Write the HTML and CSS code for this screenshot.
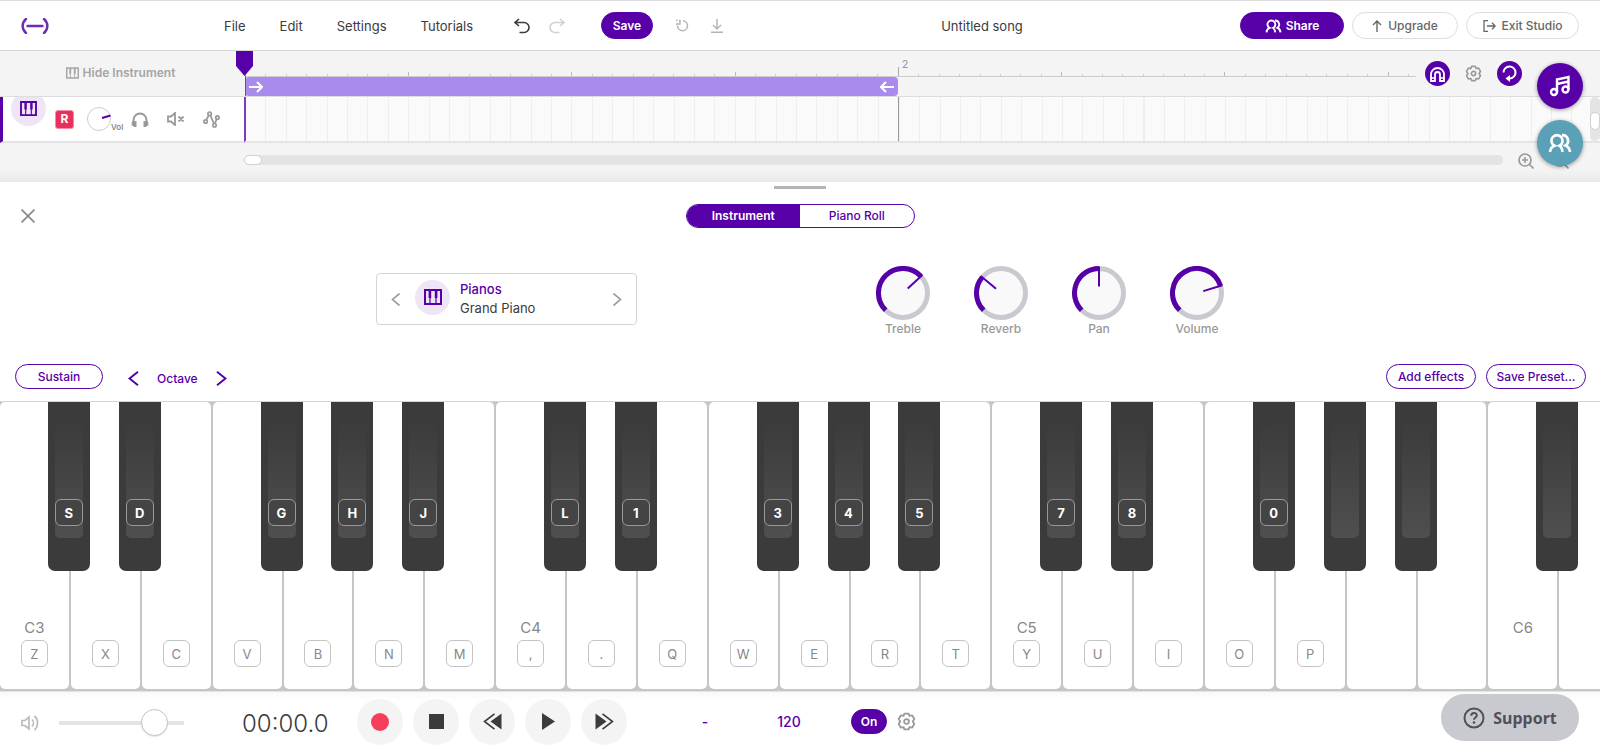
FILE: index.html
```html
<!DOCTYPE html>
<html lang="en">
<head>
    <meta charset="UTF-8">
    <meta name="viewport" content="width=device-width, initial-scale=1.0">
    <title>Untitled song</title>
    <link rel="stylesheet" href="styles.css">
</head>
<body>
    <svg class="sprite" aria-hidden="true">
        <symbol id="piano" viewBox="0 0 18 16">
            <path d="M1 1h16v14H1z" fill="none" stroke="currentColor" stroke-width="2"/>
            <path d="M4.6 1h2.6v8H4.6zM10.8 1h2.6v8h-2.6z" fill="currentColor"/>
            <path d="M6 8v7M12 8v7" stroke="currentColor" stroke-width="1.2"/>
        </symbol>
        <symbol id="people" viewBox="0 0 24 20">
            <path d="M2 19c.3-3.200 1.800-5.200 4.500-6.200a5.600 5.600 0 1 1 5 0c1.800 1 2.700 3 3 6.200M14 2.200a5.600 5.600 0 0 1 3.500 10.300c2.600 1 4.100 3.200 4.500 6.500" fill="none" stroke="currentColor" stroke-width="2.700"/>
        </symbol>
        <symbol id="gear" viewBox="0 0 18 18">
            <path d="M7 1.500h4l.8 2.200 2.600-.4 2 3.400L14.900 9l1.500 2.300-2 3.400-2.600-.4-.8 2.200H7l-.8-2.200-2.600.4-2-3.400L3.100 9 1.600 6.700l2-3.400 2.600.4z" fill="none" stroke="currentColor" stroke-width="1.700" stroke-linejoin="round"/>
            <circle cx="9" cy="9" r="2.300" fill="none" stroke="currentColor" stroke-width="1.700"/>
        </symbol>
    </svg>

    <header class="topbar">
        <a class="logo" href="#" aria-label="Home">
            <svg width="28" height="16" viewBox="0 0 28 16"><path d="M5 1C.5 5 .5 11 5 15M23 1c4.500 4 4.500 10 0 14M6.500 8h15" fill="none" stroke="currentColor" stroke-width="2.400" stroke-linecap="round"/></svg>
        </a>
        <nav class="menu">
            <button>File</button>
            <button>Edit</button>
            <button>Settings</button>
            <button>Tutorials</button>
        </nav>
        <div class="history">
            <button class="icon-btn dark" aria-label="Undo"><svg width="16" height="16" viewBox="0 0 16 16"><path d="M5 1 1 4.500 5 8M1 4.500h9a5 5 0 0 1 0 10H5.500" fill="none" stroke="currentColor" stroke-width="1.600"/></svg></button>
            <button class="icon-btn faint" aria-label="Redo"><svg width="16" height="16" viewBox="0 0 16 16"><path d="m11 1 4 3.500L11 8M15 4.500H6a5 5 0 0 0 0 10h4.500" fill="none" stroke="currentColor" stroke-width="1.600"/></svg></button>
        </div>
        <button class="pill solid save">Save</button>
        <div class="file-tools">
            <button class="icon-btn" aria-label="Revert"><svg width="14" height="14" viewBox="0 0 14 14"><path d="M1 1.500h1.500M4 1.500h1.500M1 5h4V1.500M2.500 6.500a5 5 0 1 0 5.500-4.800" fill="none" stroke="currentColor" stroke-width="1.500"/></svg></button>
            <button class="icon-btn" aria-label="Download"><svg width="14" height="14" viewBox="0 0 14 14"><path d="M7 0v10M3 6l4 4 4-4M1 13.200h12" fill="none" stroke="currentColor" stroke-width="1.500"/></svg></button>
        </div>
        <h1 class="song-title">Untitled song</h1>
        <div class="actions">
            <button class="pill solid share"><svg width="17" height="14"><use href="#people"/></svg>Share</button>
            <button class="pill upgrade"><svg width="10" height="12" viewBox="0 0 10 12"><path d="M5 12V1M1 5l4-4 4 4" fill="none" stroke="currentColor" stroke-width="1.400"/></svg>Upgrade</button>
            <button class="pill exit"><svg width="13" height="12" viewBox="0 0 13 12"><path d="M5 .7H1v10.600h4M4 6h8M9 2.800 12.200 6 9 9.200" fill="none" stroke="currentColor" stroke-width="1.300"/></svg>Exit Studio</button>
        </div>
    </header>

    <section class="arranger">
        <button class="hide-instrument"><svg width="13" height="12"><use href="#piano"/></svg>Hide Instrument</button>
        <div class="ruler">
            <div class="ticks">
                <div class="tick-bar"></div>
                <div class="tick-bar"><span>2</span></div>
            </div>
            <div class="loop-region">
                <svg width="14" height="12" viewBox="0 0 14 12"><path d="M0 6h12.500M8 1l5 5-5 5" fill="none" stroke="currentColor" stroke-width="2"/></svg>
                <svg width="14" height="12" viewBox="0 0 14 12"><path d="M14 6H1.500M6 1 1 6l5 5" fill="none" stroke="currentColor" stroke-width="2"/></svg>
            </div>
            <div class="ruler-tools">
                <button class="round" aria-label="Snap"><svg width="17" height="16" viewBox="0 0 17 16"><path d="M2 15V8.500a6.500 6.500 0 0 1 13 0V15h-4V8.500a2.500 2.500 0 0 0-5 0V15z" fill="none" stroke="currentColor" stroke-width="1.800"/><path d="M2 12h4M11 12h4" stroke="currentColor" stroke-width="1.600"/></svg></button>
                <button class="icon-btn mid" aria-label="Snap settings"><svg width="17" height="17"><use href="#gear"/></svg></button>
                <button class="round" aria-label="Loop"><svg width="17" height="17" viewBox="0 0 17 17"><path d="M2.500 7.500A6 6 0 1 1 9 13.500H6" fill="none" stroke="currentColor" stroke-width="2"/><path d="M9 10 4.500 13.500 9 17z" fill="currentColor"/></svg></button>
            </div>
        </div>

        <div class="track-head">
            <span class="avatar"><svg width="17" height="15"><use href="#piano"/></svg></span>
            <button class="arm">R</button>
            <div class="mini-knob">
                <svg width="24" height="24" viewBox="0 0 24 24"><circle cx="12" cy="12" r="11.500" fill="#fff" stroke="#ccc"/><path d="m15 11 8.500-2.500" stroke="#5700a8" stroke-width="2"/></svg>
                <span>Vol</span>
            </div>
            <button class="icon-btn mid" aria-label="Solo"><svg width="18" height="15" viewBox="0 0 18 15"><path d="M2.500 12V8a6.500 6.500 0 0 1 13 0v4" fill="none" stroke="currentColor" stroke-width="2"/><path d="M1 9.500 5.500 9v6H3.500L.5 13zM17 9.500 12.500 9v6h2l3-2z" fill="currentColor"/></svg></button>
            <button class="icon-btn mid" aria-label="Mute"><svg width="18" height="14" viewBox="0 0 18 14"><path d="M1 4.500h3L8 1v12L4 9.500H1zM11.500 4.500l5 5M16.500 4.500l-5 5" fill="none" stroke="currentColor" stroke-width="1.800"/></svg></button>
            <button class="icon-btn mid" aria-label="Automation"><svg width="17" height="17" viewBox="0 0 17 17"><g fill="none" stroke="currentColor" stroke-width="1.700"><circle cx="2.600" cy="10.500" r="1.700"/><circle cx="6.600" cy="2.700" r="1.700"/><circle cx="11.500" cy="14.200" r="1.700"/><circle cx="14.400" cy="6.500" r="1.700"/><path d="m3.300 9 2.500-4.800M7.300 4.200l3.600 8.500M12 12.500l1.700-4.400"/></g></svg></button>
        </div>
        <div class="lane">
            <div class="grid-bar"></div>
            <div class="grid-bar marked"></div>
            <div class="grid-bar"></div>
            <div class="v-scroll"><span></span></div>
        </div>

        <div class="scroll-row">
            <div class="h-scroll"><span></span></div>
            <div class="zoom-tools">
                <button class="icon-btn mid" aria-label="Zoom in"><svg width="16" height="16" viewBox="0 0 16 16"><path d="M11.500 11.500 15.500 15.500M4 7h6M7 4v6" stroke="currentColor" stroke-width="1.600"/><circle cx="7" cy="7" r="6" fill="none" stroke="currentColor" stroke-width="1.700"/></svg></button>
                <button class="icon-btn mid" aria-label="Zoom out"><svg width="16" height="16" viewBox="0 0 16 16"><path d="M11.500 11.500 15.500 15.500M4 7h6" stroke="currentColor" stroke-width="1.600"/><circle cx="7" cy="7" r="6" fill="none" stroke="currentColor" stroke-width="1.700"/></svg></button>
            </div>
        </div>
        <div class="playhead"></div>
        <div class="fabs">
            <button aria-label="Loops"><svg width="22" height="22" viewBox="0 0 22 22"><g fill="none" stroke="currentColor" stroke-width="2.400"><circle cx="5" cy="17" r="3"/><circle cx="16.500" cy="14.500" r="3"/><path d="M8 17V4.500l11.500-2.500v12.500M8 9l11.500-2.500"/></g></svg></button>
            <button class="teal" aria-label="Collaborators"><svg width="24" height="20"><use href="#people"/></svg></button>
        </div>
    </section>

    <main class="instrument">
        <div class="handle"></div>
        <div class="tab-row">
            <button class="icon-btn close" aria-label="Close"><svg width="14" height="14" viewBox="0 0 14 14"><path d="m.5.5 13 13M13.500.5l-13 13" stroke="currentColor" stroke-width="1.600"/></svg></button>
            <div class="tabs">
                <button class="active">Instrument</button>
                <button>Piano Roll</button>
            </div>
        </div>
        <div class="settings">
            <div class="picker">
                <button class="icon-btn mid" aria-label="Previous"><svg width="9" height="13" viewBox="0 0 9 13"><path d="M8.500.5 1.500 6.500l7 6" fill="none" stroke="currentColor" stroke-width="1.600"/></svg></button>
                <span class="avatar"><svg width="18" height="16"><use href="#piano"/></svg></span>
                <div class="picker-name">
                    <strong>Pianos</strong>
                    <span>Grand Piano</span>
                </div>
                <button class="icon-btn mid" aria-label="Next"><svg width="9" height="13" viewBox="0 0 9 13"><path d="m.5.5 7 6-7 6" fill="none" stroke="currentColor" stroke-width="1.600"/></svg></button>
            </div>
            <div class="knobs" id="knobs"></div>
        </div>
        <div class="toolbar">
            <button class="pill outline sustain">Sustain</button>
            <div class="octave">
                <button class="icon-btn" aria-label="Octave down"><svg width="11" height="15" viewBox="0 0 11 15"><path d="M10 .8 1.500 7.500l8.500 6.700" fill="none" stroke="currentColor" stroke-width="2"/></svg></button>
                <span>Octave</span>
                <button class="icon-btn" aria-label="Octave up"><svg width="11" height="15" viewBox="0 0 11 15"><path d="m1 .8 8.500 6.700L1 14.200" fill="none" stroke="currentColor" stroke-width="2"/></svg></button>
            </div>
            <button class="pill outline effects">Add effects</button>
            <button class="pill outline preset">Save Preset...</button>
        </div>
        <div class="keyboard" id="keyboard"></div>
    </main>

    <footer class="transport">
        <label class="volume" for="master">
            <svg width="18" height="16" viewBox="0 0 18 16"><path d="M1 5.500h3L8 2v12l-4-3.500H1zM11 4.500a5 5 0 0 1 0 7M13.500 1c4 3.500 4 10.500 0 14" fill="none" stroke="currentColor" stroke-width="1.700"/></svg>
        </label>
        <input id="master" type="range" min="0" max="100" value="84" aria-label="Master volume">
        <output class="time">00:00.0</output>
        <div class="transport-buttons">
            <button aria-label="Record"><svg width="18" height="18" viewBox="0 0 18 18"><circle cx="9" cy="9" r="9" fill="#f43e5c"/></svg></button>
            <button aria-label="Stop"><svg width="15" height="15" viewBox="0 0 15 15"><path d="M0 0h15v15H0z" fill="currentColor"/></svg></button>
            <button aria-label="Rewind"><svg width="19" height="17" viewBox="0 0 19 17"><path d="M18.500.5v16L7.500 8.500z" fill="currentColor"/><path d="M11.500.8 1.500 8.500l10 7.700" fill="none" stroke="currentColor" stroke-width="1.600"/></svg></button>
            <button aria-label="Play"><svg width="13" height="17" viewBox="0 0 13 17"><path d="M0 0v17l13-8.500z" fill="currentColor"/></svg></button>
            <button aria-label="Forward"><svg width="19" height="17" viewBox="0 0 19 17"><path d="M.5.5v16l11-8z" fill="currentColor"/><path d="m7.500.8 10 7.700-10 7.700" fill="none" stroke="currentColor" stroke-width="1.600"/></svg></button>
        </div>
        <button class="signature">-</button>
        <button class="tempo">120</button>
        <button class="pill solid metronome">On</button>
        <button class="icon-btn mid" aria-label="Metronome settings"><svg width="19" height="19"><use href="#gear"/></svg></button>
        <button class="support"><svg width="22" height="22" viewBox="0 0 22 22"><circle cx="11" cy="11" r="9.500" fill="none" stroke="currentColor" stroke-width="2"/><path d="M8.200 8.700c0-3.600 5.600-3.600 5.600-.3 0 2-2.800 2.200-2.800 4.400" fill="none" stroke="currentColor" stroke-width="2"/><circle cx="11" cy="15.500" r="1.300" fill="currentColor"/></svg>Support</button>
    </footer>

    <script>
        // angle: degrees clockwise from 12 o'clock, travel starts at -135
        const knobs = [
            { name: "Treble", angle: 47 },
            { name: "Reverb", angle: -50 },
            { name: "Pan", angle: 0 },
            { name: "Volume", angle: 73 },
        ];

        const whiteLabels = "ZXCVBNM,.QWERTYUIOP";
        const blackLabels = { 0: "S", 1: "D", 3: "G", 4: "H", 5: "J", 7: "L", 8: "1", 10: "3", 11: "4", 12: "5", 14: "7", 15: "8", 17: "0" };
        const whiteCount = 23;

        function point(angle, r) {
            const a = angle * Math.PI / 180;
            return `${(27 + r * Math.sin(a)).toFixed(2)} ${(27 - r * Math.cos(a)).toFixed(2)}`;
        }

        document.getElementById("knobs").innerHTML = knobs.map(k => `
            <div class="knob">
                <svg width="54" height="54" viewBox="0 0 54 54">
                    <circle cx="27" cy="27" r="24.500" fill="#f9f9f9" stroke="#c9cad0" stroke-width="5"/>
                    <path d="M${point(-135, 24.5)}A24.500 24.500 0 ${k.angle > 45 ? 1 : 0} 1 ${point(k.angle, 24.5)}" fill="none" stroke="#5700a8" stroke-width="5"/>
                    <path d="M${point(k.angle, 26.5)}L${point(k.angle, 6.5)}" stroke="#5700a8" stroke-width="2"/>
                </svg>
                <span>${k.name}</span>
            </div>
        `).join("");

        let keys = "";
        for (let i = 0; i < whiteCount; i++) {
            const octave = i % 7 === 0 ? `<span class="octave-name">C${3 + i / 7}</span>` : "";
            const cap = whiteLabels[i] ? `<span class="cap">${whiteLabels[i]}</span>` : `<span class="cap empty"></span>`;
            keys += `<div class="key"><button class="white" aria-label="White key ${i + 1}">${octave}${cap}</button>`;
            if (![2, 6].includes(i % 7) && i < whiteCount - 1) {
                const label = blackLabels[i] ? `<span class="cap">${blackLabels[i]}</span>` : "";
                keys += `<button class="black" aria-label="Black key ${i + 1}"><span class="shine"></span>${label}</button>`;
            }
            keys += `</div>`;
        }
        document.getElementById("keyboard").innerHTML = keys;
    </script>
</body>
</html>
```
FILE: styles.css
```css
* {
    box-sizing: border-box;
}

body {
    margin: 0;
    min-height: 100vh;
    display: flex;
    flex-direction: column;
    font-family: Inter, "Liberation Sans", sans-serif;
    font-size: 13px;
    color: #3b3b3b;
    background-color: #fff;
}

button {
    margin: 0;
    padding: 0;
    border: none;
    background: none;
    font: inherit;
    color: inherit;
    cursor: pointer;
}

svg {
    display: block;
    flex: none;
}

.sprite {
    position: absolute;
    width: 0;
    height: 0;
}

.icon-btn {
    color: #b5b5b5;
}

.icon-btn.dark {
    color: #3b3b3b;
}

.icon-btn.faint {
    color: #d0d0d0;
}

.icon-btn.mid {
    color: #999;
}

.pill {
    display: flex;
    align-items: center;
    justify-content: center;
    gap: 6px;
    height: 27px;
    border: 1px solid #ddd;
    border-radius: 14px;
    font-size: 12px;
    font-weight: 500;
    color: #666;
}

.pill.solid {
    border-color: #5700a8;
    background-color: #5700a8;
    color: #fff;
    font-weight: 600;
}

.pill.outline {
    height: 25px;
    border-color: #5700a8;
    color: #5700a8;
}

/* Top bar */
.topbar {
    display: flex;
    align-items: center;
    height: 51px;
    padding: 0 21px;
    border-top: 1px solid #ddd;
    border-bottom: 1px solid #d5d5d5;
}

.logo {
    width: 203px;
    color: #6f2bb5;
}

.menu {
    display: flex;
    gap: 34px;
    width: 290px;
    padding-top: 1px;
}

.history {
    display: flex;
    gap: 19px;
    width: 87px;
}

.save {
    width: 52px;
}

.file-tools {
    display: flex;
    gap: 21px;
    margin-left: 22px;
}

.song-title {
    flex: 1;
    margin: 0;
    padding-top: 1px;
    font-size: 13px;
    font-weight: 400;
    text-align: center;
}

.actions {
    display: flex;
    gap: 8px;
}

.share {
    width: 104px;
    gap: 4px;
}

.upgrade {
    width: 106px;
}

.exit {
    width: 113px;
}

/* Arranger */
.arranger {
    position: relative;
    display: grid;
    grid-template-columns: 245px minmax(0, 1fr);
    grid-template-rows: 46px 46px 39px;
    background-color: #f4f4f4;
}

.hide-instrument {
    display: flex;
    align-items: center;
    justify-content: center;
    gap: 4px;
    padding-right: 4px;
    padding-bottom: 2px;
    border-bottom: 1px solid #ddd;
    font-size: 12px;
    font-weight: 600;
    color: #a5a5a5;
}

.ruler {
    position: relative;
    display: flex;
    flex-direction: column;
    border-bottom: 1px solid #ddd;
}

.ticks {
    display: flex;
    align-items: flex-end;
    height: 26px;
    margin-right: 184px;
    border-bottom: 1px solid #ccc;
    overflow: hidden;
}

.tick-bar {
    flex: none;
    width: 40.8vw;
    height: 20px;
    padding-left: 4px;
    font-size: 11px;
    line-height: 16px;
    color: #999;
    background-image:
        linear-gradient(to right, #aaa 1px, transparent 1px),
        repeating-linear-gradient(to right, #bbb 0 1px, transparent 1px 25%),
        repeating-linear-gradient(to right, #ccc 0 1px, transparent 1px 3.125%);
    background-size: 100% 9px, 100% 4px, 100% 2px;
    background-position: bottom;
    background-repeat: no-repeat;
}

.loop-region {
    display: flex;
    align-items: center;
    justify-content: space-between;
    width: 40.8vw;
    height: 19px;
    padding: 0 4px;
    border-radius: 4px;
    background-color: #a98bee;
    color: #fff;
}

.ruler-tools {
    position: absolute;
    top: 10px;
    right: 78px;
    display: flex;
    align-items: center;
    gap: 15px;
}

.round {
    display: grid;
    place-items: center;
    width: 25px;
    height: 25px;
    border-radius: 50%;
    background-color: #5700a8;
    color: #fff;
}

.track-head {
    display: flex;
    align-items: center;
    padding-left: 8px;
    border-left: 3px solid #5700a8;
    border-right: 1px solid #7a3cc0;
    border-bottom: 2px solid #e4e4e4;
    background-color: #fff;
    overflow: hidden;
}

.avatar {
    display: grid;
    place-items: center;
    width: 35px;
    height: 35px;
    border-radius: 50%;
    background-color: #eee6f7;
    color: #5700a8;
}

.track-head .avatar {
    margin-top: -21px;
}

.arm {
    width: 19px;
    height: 19px;
    margin-left: 9px;
    border: 1px solid #ff8a9e;
    border-radius: 3px;
    background-color: #e8305a;
    color: #fff;
    font-size: 12px;
    font-weight: 700;
    line-height: 16px;
}

.mini-knob {
    display: flex;
    align-items: flex-end;
    width: 44px;
    margin-left: 13px;
    font-size: 8px;
    font-weight: 600;
    line-height: 8px;
    color: #888;
}

.track-head .icon-btn {
    width: 18px;
    margin-right: 18px;
}

.lane {
    position: relative;
    display: flex;
    border-bottom: 2px solid #e4e4e4;
    background-color: #fafafa;
    overflow: hidden;
}

.grid-bar {
    flex: none;
    width: 40.8vw;
    background-image: repeating-linear-gradient(to right, #eee 0 1px, transparent 1px 3.125%);
}

.grid-bar.marked {
    border-left: 1px solid #999;
}

.v-scroll {
    position: absolute;
    top: 0;
    right: 0;
    bottom: 0;
    width: 10px;
    padding-top: 15px;
    border-radius: 5px;
    background-color: #e4e4e4;
}

.v-scroll span,
.h-scroll span {
    display: block;
    width: 10px;
    height: 18px;
    border: 1px solid #d0d0d0;
    border-radius: 5px;
    background-color: #fff;
}

.scroll-row {
    grid-column: 1 / -1;
    display: flex;
    align-items: center;
    padding: 0 31px 6px 244px;
    background-image: linear-gradient(to top, #e9e9e9, #f4f4f4 12px);
}

.h-scroll {
    flex: 1;
    height: 10px;
    border-radius: 5px;
    background-color: #e4e4e4;
}

.h-scroll span {
    width: 18px;
    height: 10px;
}

.zoom-tools {
    display: flex;
    gap: 19px;
    padding-top: 3px;
    margin-left: 15px;
}

.playhead {
    position: absolute;
    top: 0;
    left: 236px;
    width: 17px;
    height: 25px;
    background-color: #5700a8;
    clip-path: polygon(0 0, 100% 0, 100% 60%, 50% 100%, 0 60%);
}

/* playhead line, continued through both rows */
.lane::before,
.ruler::before {
    content: "";
    position: absolute;
    z-index: 1;
    top: 0;
    bottom: 0;
    left: 0;
    width: 1px;
    background-color: #7a3cc0;
}

.ruler::before {
    top: 25px;
}

.fabs {
    position: absolute;
    z-index: 2;
    top: 12px;
    right: 17px;
    display: flex;
    flex-direction: column;
    gap: 11px;
}

.fabs button {
    display: grid;
    place-items: center;
    width: 46px;
    height: 46px;
    border-radius: 50%;
    background-color: #5700a8;
    color: #fff;
    box-shadow: 0 1px 4px rgba(0, 0, 0, 0.4);
}

.fabs .teal {
    background-color: #5aa1b7;
}

/* Instrument panel */
.instrument {
    flex: 1;
    display: flex;
    flex-direction: column;
}

.handle {
    width: 52px;
    height: 3px;
    margin: 4px auto 15px;
    background-color: #b5b5b5;
}

.tab-row {
    display: grid;
    grid-template-columns: 1fr auto 1fr;
    align-items: center;
    padding: 0 21px;
}

.close {
    justify-self: start;
}

.icon-btn.close {
    color: #888;
}

.tabs {
    display: flex;
    width: 229px;
    height: 24px;
    border: 1px solid #5700a8;
    border-radius: 12px;
    overflow: hidden;
    font-size: 12px;
    font-weight: 500;
    color: #5700a8;
}

.tabs button {
    flex: 1;
    padding-bottom: 1px;
}

.tabs .active {
    background-color: #5700a8;
    color: #fff;
    font-weight: 600;
}

.settings {
    display: flex;
    align-items: flex-start;
    justify-content: center;
    gap: 239px;
    height: 136px;
    padding-top: 38px;
}

.picker {
    display: flex;
    align-items: center;
    width: 261px;
    height: 52px;
    margin-top: 7px;
    padding: 0 14px;
    border: 1px solid #d5d5d5;
    border-radius: 4px;
}

.picker .avatar {
    margin: 0 10px 4px 15px;
}

.picker-name {
    flex: 1;
    display: flex;
    flex-direction: column;
    line-height: 19px;
}

.picker-name strong {
    font-weight: 500;
    color: #5700a8;
}

.knobs {
    display: flex;
    gap: 44px;
}

.knob {
    display: flex;
    flex-direction: column;
    align-items: center;
    width: 54px;
    font-size: 12px;
    font-weight: 500;
    line-height: 18px;
    color: #999;
}

.toolbar {
    display: flex;
    align-items: center;
    gap: 10px;
    height: 37px;
    padding: 0 14px 12px 15px;
}

.sustain {
    width: 88px;
}

.octave {
    flex: 1;
    display: flex;
    align-items: center;
    gap: 18px;
    padding: 3px 0 0 15px;
    font-size: 12px;
    font-weight: 500;
    color: #5700a8;
}

.octave .icon-btn {
    color: #5700a8;
}

.effects {
    width: 90px;
}

.preset {
    width: 100px;
}

/* Keyboard */
.keyboard {
    flex: 1;
    display: flex;
    min-height: 240px;
    padding-bottom: 2px;
    border-top: 1px solid #d5d5d5;
    background-color: #c4c6c8;
    overflow: hidden;
}

.key {
    position: relative;
    flex: none;
    width: 4.43%;
    padding-right: 2px;
}

.white {
    display: flex;
    flex-direction: column;
    align-items: center;
    justify-content: flex-end;
    width: 100%;
    height: 100%;
    padding-bottom: 22px;
    border-radius: 5px;
    background-color: #fff;
    color: #888;
}

.octave-name {
    margin-bottom: 2px;
    font-size: 15px;
    line-height: 20px;
}

.cap {
    display: grid;
    place-items: center;
    width: 27px;
    height: 27px;
    border: 1px solid #c4c4c4;
    border-radius: 6px;
    font-size: 13px;
}

.cap.empty {
    visibility: hidden;
}

.black {
    position: absolute;
    z-index: 1;
    top: 0;
    right: -19px;
    display: flex;
    justify-content: center;
    align-items: flex-end;
    width: 42px;
    height: 59%;
    padding-bottom: 45px;
    border-radius: 0 0 7px 7px;
    background-color: #3b3b3b;
    color: #fff;
}

.shine {
    position: absolute;
    top: 18px;
    right: 7px;
    bottom: 33px;
    left: 7px;
    border-radius: 5px;
    background-image: linear-gradient(to bottom, #3b3b3b, #4f4f4f);
}

.black .cap {
    position: relative;
    width: 28px;
    border-color: #999;
    background-color: #444;
    font-weight: 700;
}

/* Transport */
.transport {
    display: flex;
    align-items: center;
    height: 60px;
    padding: 0 21px;
    border-top: 1px solid #e4e4e4;
    background-image: linear-gradient(to bottom, #f9f9fa, #fff 10px);
}

.volume {
    margin-right: 20px;
    padding-top: 2px;
    color: #bbb;
}

#master {
    appearance: none;
    width: 125px;
    height: 28px;
    margin: 2px 0 0;
    background: linear-gradient(#e4e4e4, #e4e4e4) center / 100% 4px no-repeat;
}

#master::-webkit-slider-thumb {
    appearance: none;
    width: 27px;
    height: 27px;
    border: 1px solid #c4c4c4;
    border-radius: 50%;
    background-color: #fff;
    box-shadow: 0 1px 1px rgba(0, 0, 0, 0.1);
}

.time {
    width: 115px;
    margin-left: 58px;
    padding-top: 4px;
    font-size: 24px;
    font-weight: 300;
}

.transport-buttons {
    display: flex;
    gap: 10px;
}

.transport-buttons button {
    display: grid;
    place-items: center;
    width: 46px;
    height: 46px;
    border-radius: 50%;
    background-color: #f4f4f4;
}

.signature,
.tempo {
    width: 50px;
    font-size: 14px;
    font-weight: 500;
    color: #5700a8;
}

.signature {
    margin-left: 53px;
}

.tempo {
    margin-left: 34px;
}

.metronome {
    width: 36px;
    height: 25px;
    margin: 0 10px 0 37px;
    font-size: 12px;
}

.support {
    display: flex;
    align-items: center;
    justify-content: center;
    gap: 8px;
    width: 138px;
    height: 47px;
    margin: -8px 0 0 auto;
    border-radius: 24px;
    background-color: #c9cad0;
    color: #505058;
    font-family: "Noto Sans", sans-serif;
    font-size: 16px;
    font-weight: 700;
}
```
